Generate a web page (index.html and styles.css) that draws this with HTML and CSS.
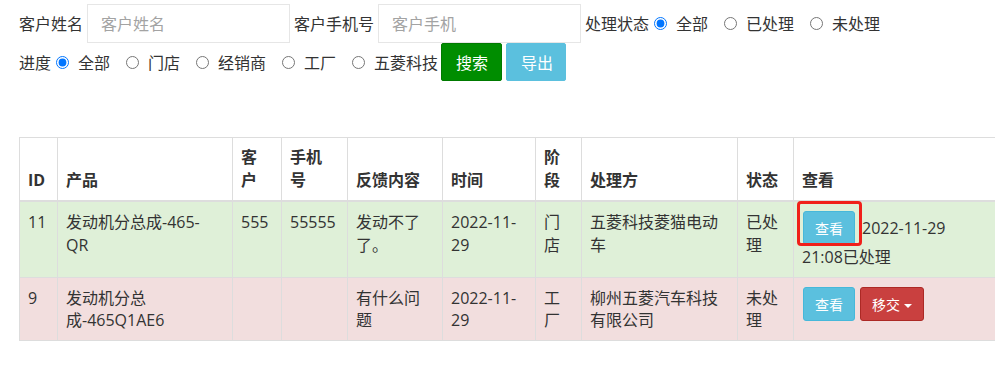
FILE: index.html
```html
<!DOCTYPE html>
<html lang="zh-CN">
<head>
<meta charset="utf-8">
<title>反馈列表</title>
<link rel="stylesheet" href="styles.css">
</head>
<body>
<form class="filters">
  <div class="filter-row">
    <label class="lbl" for="name">客户姓名</label>
    <input class="text-input" id="name" type="text" placeholder="客户姓名">
    <label class="lbl" for="phone">客户手机号</label>
    <input class="text-input" id="phone" type="text" placeholder="客户手机">
    <span class="lbl">处理状态</span>
    <label class="opt"><input type="radio" name="status" checked><span>全部</span></label>
    <label class="opt"><input type="radio" name="status"><span>已处理</span></label>
    <label class="opt"><input type="radio" name="status"><span>未处理</span></label>
  </div>
  <div class="filter-row">
    <span class="lbl">进度</span>
    <label class="opt"><input type="radio" name="stage" checked><span>全部</span></label>
    <label class="opt"><input type="radio" name="stage"><span>门店</span></label>
    <label class="opt"><input type="radio" name="stage"><span>经销商</span></label>
    <label class="opt"><input type="radio" name="stage"><span>工厂</span></label>
    <label class="opt"><input type="radio" name="stage"><span>五菱科技</span></label>
    <button type="button" class="btn btn-search">搜索</button>
    <button type="button" class="btn btn-export">导出</button>
  </div>
</form>

<div class="table-wrap">
  <table class="data">
    <colgroup>
      <col class="c-id"><col class="c-prod"><col class="c-cust"><col class="c-phone"><col class="c-fb">
      <col class="c-time"><col class="c-stage"><col class="c-handler"><col class="c-status"><col class="c-view">
    </colgroup>
    <thead>
      <tr>
        <th>ID</th><th>产品</th><th>客户</th><th>手机号</th><th>反馈内容</th>
        <th>时间</th><th>阶段</th><th>处理方</th><th>状态</th><th>查看</th>
      </tr>
    </thead>
    <tbody>
      <tr class="row-ok">
        <td>11</td>
        <td class="prod">发动机分总成-465-QR</td>
        <td>555</td>
        <td>55555</td>
        <td>发动不了了。</td>
        <td>2022-11-29</td>
        <td>门店</td>
        <td>五菱科技菱猫电动车</td>
        <td>已处理</td>
        <td class="view"><button type="button" class="btn-sm btn-info marked">查看</button>2022-11-29 21:08已处理</td>
      </tr>
      <tr class="row-bad">
        <td>9</td>
        <td class="prod">发动机分总成-465Q1AE6</td>
        <td></td>
        <td></td>
        <td>有什么问题</td>
        <td>2022-11-29</td>
        <td>工厂</td>
        <td>柳州五菱汽车科技有限公司</td>
        <td>未处理</td>
        <td class="view"><button type="button" class="btn-sm btn-info">查看</button><button type="button" class="btn-sm btn-danger">移交<span class="caret"></span></button></td>
      </tr>
    </tbody>
  </table>
</div>
</body>
</html>
```
FILE: styles.css
```css
html, body {
  margin: 0;
  padding: 0;
  background: #fff;
  overflow-x: hidden;
}
body {
  font-family: "Open Sans", "Noto Sans CJK SC", sans-serif;
  font-size: 16px;
  line-height: 1.42857;
  color: #333;
}
.filters {
  padding: 4px 0 0 19px;
}
.filter-row {
  display: flex;
  align-items: center;
  height: 38px;
  margin-bottom: 1px;
  white-space: nowrap;
}
.lbl {
  font-family: "Noto Sans CJK SC", sans-serif;
  margin-right: 4px;
}
.text-input {
  box-sizing: border-box;
  width: 203px;
  height: 39px;
  margin: 0 4px 0 0;
  padding: 0 13px;
  border: 1px solid #e6e6e6;
  border-radius: 0;
  font-family: "Noto Sans CJK SC", sans-serif;
  font-size: 16px;
  color: #333;
  outline: none;
}
.text-input::placeholder {
  color: #a3a3a3;
}
.opt {
  display: inline-flex;
  align-items: center;
  font-family: "Noto Sans CJK SC", sans-serif;
  margin-right: 15px;
}
.opt input {
  width: 13px;
  height: 13px;
  margin: 1px 9px 0 1px;
}
.opt:last-of-type {
  margin-right: 3px;
}
.btn {
  box-sizing: border-box;
  height: 38px;
  padding: 0 14px;
  margin: 0 4px 0 0;
  border: 1px solid transparent;
  border-radius: 2px;
  color: #fff;
  font-family: "Noto Sans CJK SC", sans-serif;
  font-size: 16px;
  cursor: pointer;
}
.btn-search {
  width: 61px;
  background: #008d00;
  border-color: #007a00;
}
.btn-export {
  width: 60px;
  background: #5bc0de;
  border-color: #5bc0de;
}

.table-wrap {
  margin-top: 56px;
  padding-left: 19px;
  overflow: hidden;
}
.data {
  border-collapse: collapse;
  table-layout: fixed;
  width: 984px;
  border: 1px solid #ddd;
}
.c-id { width: 38px; }
.c-prod { width: 175px; }
.c-cust { width: 49px; }
.c-phone { width: 66px; }
.c-fb { width: 95px; }
.c-time { width: 93px; }
.c-stage { width: 46px; }
.c-handler { width: 156px; }
.c-status { width: 56px; }
.c-view { width: 210px; }

.data th,
.data td {
  border: 1px solid #ddd;
  padding: 8px 10px 8px 8px;
  text-align: left;
}
.data th {
  vertical-align: bottom;
  border-bottom-width: 2px;
  font-weight: bold;
  background: #fff;
}
.data td {
  vertical-align: top;
  padding-top: 9px;
}
.data td.prod {
  padding-right: 12px;
}
.data td.view {
  padding-right: 36px;
}
.row-ok td {
  background: #dff0d8;
}
.row-bad td {
  background: #f2dede;
}

.btn-sm {
  position: relative;
  display: inline-block;
  box-sizing: border-box;
  height: 34px;
  padding: 0 10px;
  margin: 0 5px 1px 1px;
  border: 1px solid transparent;
  border-radius: 3px;
  color: #fff;
  font-family: "Noto Sans CJK SC", sans-serif;
  font-size: 14px;
  line-height: 32px;
  white-space: nowrap;
  cursor: pointer;
}
.btn-info {
  width: 52px;
  background: #5bc0de;
  border-color: #46b8da;
}
.marked {
  margin-right: 7px;
}
.btn-danger {
  width: 64px;
  margin-left: 0;
  background: #c9403f;
  border-color: #ac2925;
}
.caret {
  display: inline-block;
  width: 0;
  height: 0;
  margin-left: 4px;
  vertical-align: middle;
  border-top: 4px solid #fff;
  border-left: 4px solid transparent;
  border-right: 4px solid transparent;
}
.marked::after {
  content: "";
  position: absolute;
  left: -7px;
  top: -11px;
  width: 65px;
  height: 45px;
  box-sizing: border-box;
  border: 3px solid #f0201a;
  border-radius: 4px;
  pointer-events: none;
}
```
